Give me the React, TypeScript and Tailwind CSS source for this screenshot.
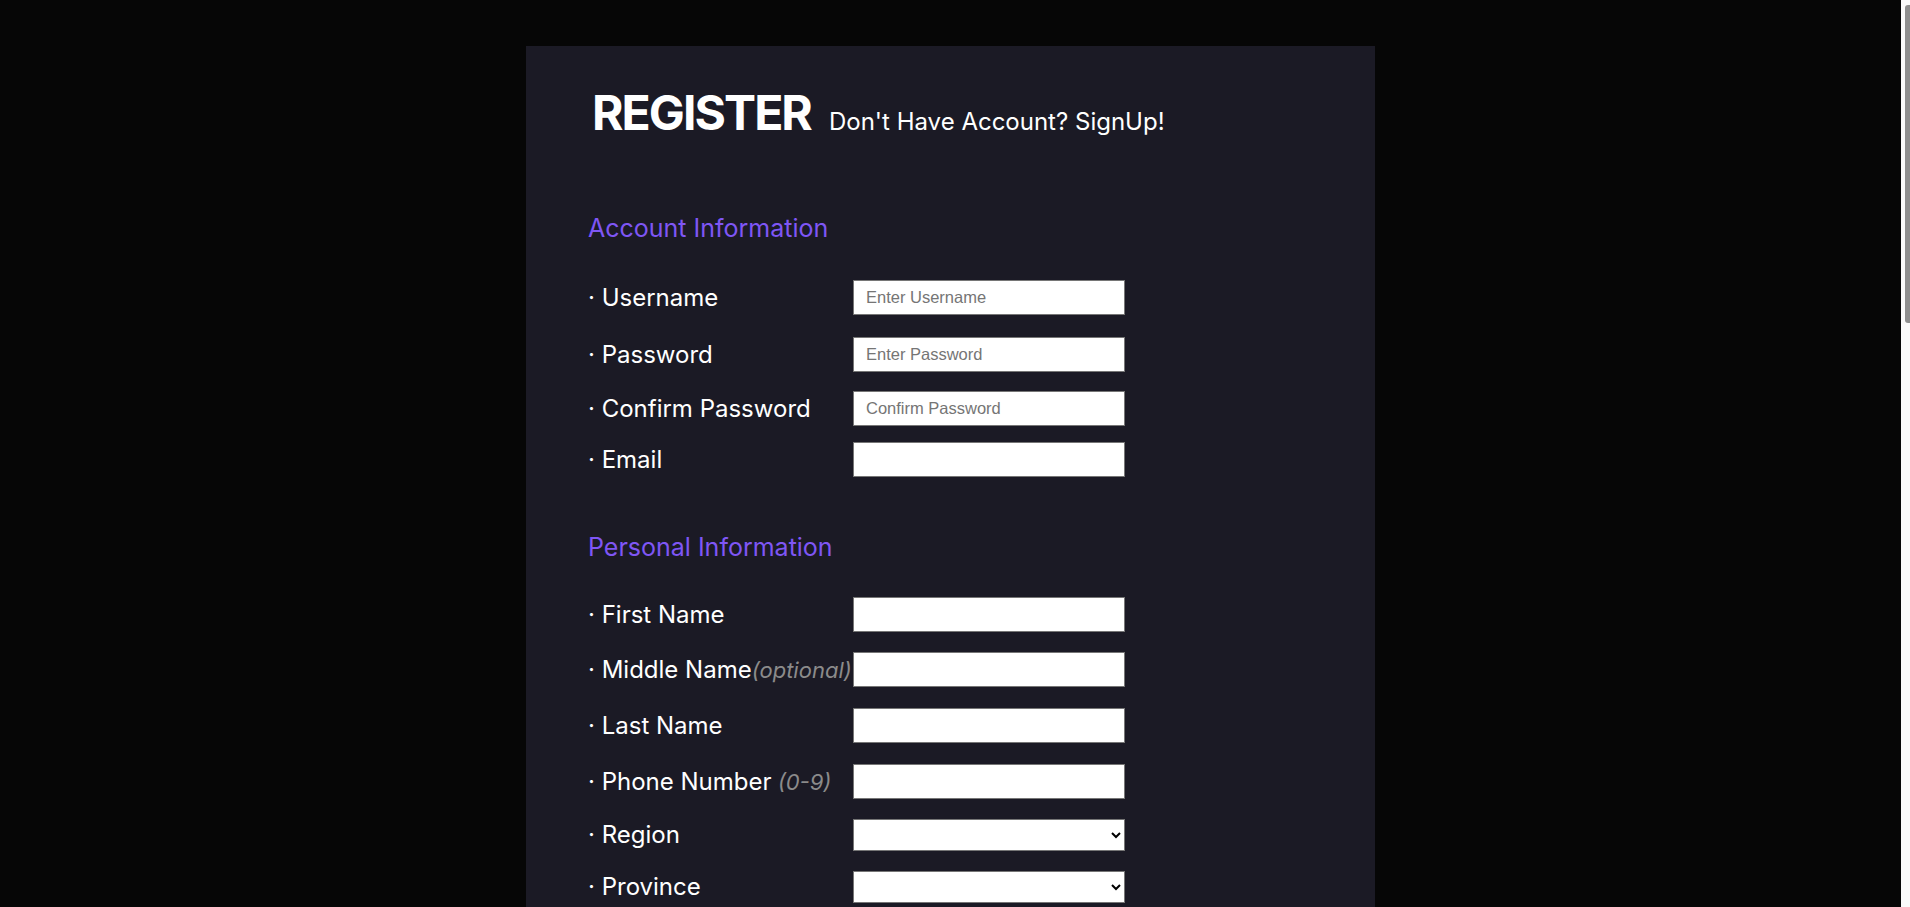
import React from "react";

const font = { fontFamily: "Inter, 'Noto Sans', sans-serif" };

function Row({ label, extra, extraSpace, children, className = "" }: { label: string; extra?: string; extraSpace?: boolean; children: React.ReactNode; className?: string }) {
  return (
    <div className={"flex items-center h-[35px] " + className}>
      <div className="w-[265px] shrink-0 text-[24px] text-white whitespace-nowrap leading-none">
        {"· " + label}
        {extra && (
          <span className="italic text-[#8b8b8b] text-[22px]">
            {extraSpace ? " " : ""}
            {extra}
          </span>
        )}
      </div>
      {children}
    </div>
  );
}

function TextInput({ placeholder, type = "text" }: { placeholder?: string; type?: string }) {
  return (
    <input
      type={type}
      placeholder={placeholder}
      className="w-[272px] h-[35px] bg-white border border-[#767676] px-[12px] text-[16.5px] text-black placeholder:text-[#757575] outline-none"
      style={{ fontFamily: "'Liberation Sans', Arial, sans-serif" }}
    />
  );
}

function Select() {
  return (
    <select
      className="w-[272px] h-[32px] bg-white border border-[#767676] text-[15px] text-black outline-none"
      style={{ fontFamily: "'Liberation Sans', Arial, sans-serif" }}
      defaultValue=""
    >
      <option value=""></option>
    </select>
  );
}

export default function App() {
  return (
    <div className="flex h-screen bg-[#060606]" style={font}>
      <main className="flex-1 h-screen overflow-y-auto [scrollbar-width:none]">
        <div className="w-[849px] mx-auto mt-[46px] mb-[46px] min-h-[2500px] bg-[#1b1a25] px-[62px] pt-[43px]">
          <div className="flex items-baseline gap-[18px] pl-[4px]">
            <h1 className="text-[48px] font-bold text-white leading-[48px] tracking-[-0.04em]">REGISTER</h1>
            <span className="text-[24px] text-white">Don't Have Account? SignUp!</span>
          </div>

          <h2 className="mt-[72px] text-[25px] leading-[32px] text-[#7f56f5]">Account Information</h2>
          <div className="mt-[36px] flex flex-col">
            <Row label="Username">
              <TextInput placeholder="Enter Username" />
            </Row>
            <Row label="Password" className="mt-[22px]">
              <TextInput placeholder="Enter Password" type="password" />
            </Row>
            <Row label="Confirm Password" className="mt-[19px]">
              <TextInput placeholder="Confirm Password" type="password" />
            </Row>
            <Row label="Email" className="mt-[16px]">
              <TextInput type="email" />
            </Row>
          </div>

          <h2 className="mt-[54px] text-[25px] leading-[32px] text-[#7f56f5]">Personal Information</h2>
          <div className="mt-[34px] flex flex-col">
            <Row label="First Name">
              <TextInput />
            </Row>
            <Row label="Middle Name" extra="(optional)" className="mt-[20px]">
              <TextInput />
            </Row>
            <Row label="Last Name" className="mt-[21px]">
              <TextInput />
            </Row>
            <Row label="Phone Number" extra="(0-9)" extraSpace className="mt-[21px]">
              <TextInput />
            </Row>
            <Row label="Region" className="mt-[18px]">
              <Select />
            </Row>
            <Row label="Province" className="mt-[17px]">
              <Select />
            </Row>
            <Row label="City / Municipality" className="mt-[20px]">
              <Select />
            </Row>
            <Row label="Barangay" className="mt-[20px]">
              <Select />
            </Row>
            <Row label="Street Address" className="mt-[20px]">
              <TextInput />
            </Row>
            <Row label="Zip Code" className="mt-[20px]">
              <TextInput />
            </Row>
            <Row label="Birthdate" className="mt-[20px]">
              <TextInput type="date" />
            </Row>
          </div>

          <div className="mt-[60px]">
            <button className="bg-[#7f56f5] text-white text-[20px] px-[28px] py-[10px]">Register</button>
          </div>
        </div>
      </main>
      <div className="w-[9px] shrink-0 h-screen bg-[#fafafa] pl-[4px] pt-[5px]">
        <div className="h-[318px] bg-[#8f8f8f] rounded-l-[3px]" />
      </div>
    </div>
  );
}
